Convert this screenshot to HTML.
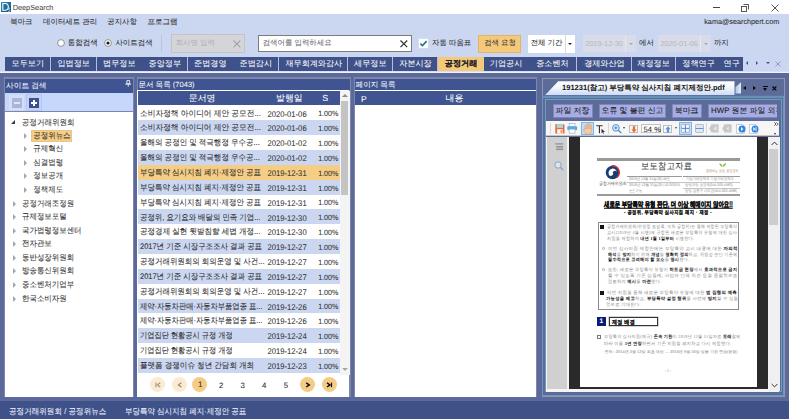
<!DOCTYPE html><html><head><meta charset="utf-8"><style>
*{box-sizing:border-box;margin:0;padding:0}
html,body{width:789px;height:419px;overflow:hidden;background:#5c6a9b;font-family:"Liberation Sans",sans-serif;text-rendering:geometricPrecision}
.a{position:absolute}
.t{position:absolute;white-space:nowrap;line-height:1;-webkit-text-stroke-width:0.06px}
</style></head><body>
<div class="a" style="left:0px;top:0px;width:789.00px;height:14.00px;background:#fff;"></div>
<svg class="a" style="left:1px;top:2px" width="10" height="10"><defs><linearGradient id="ig" x1="0" y1="0" x2="1" y2="1"><stop offset="0" stop-color="#2a8ab8"/><stop offset="1" stop-color="#15507e"/></linearGradient></defs><rect width="10" height="10" fill="url(#ig)"/><path d="M1.8 1.5H4.2Q7.3 1.5 7.3 4.8Q7.3 8.2 4.2 8.2H1.8Z" fill="none" stroke="#fff" stroke-width="1.1"/><path d="M9 6.2Q7.5 5.8 7.6 7.1Q7.7 8 8.6 8.2Q9.5 8.5 8.9 9.3Q8.2 9.8 7.2 9.3" fill="none" stroke="#fff" stroke-width="0.6"/></svg>
<div class="t" style="left:12.63px;top:4.34px;font-size:7.35px;color:#3a3a3a;-webkit-text-stroke-width:0">DeepSearch</div>
<div class="a" style="left:713px;top:6.5px;width:7.00px;height:1.00px;background:#444;"></div>
<svg class="a" style="left:740.5px;top:3.5px" width="8" height="8"><path d="M2.5 0.5H7.5V5.5" fill="none" stroke="#444" stroke-width="0.9"/><rect x="0.5" y="2.5" width="5" height="5" fill="none" stroke="#444" stroke-width="0.9"/></svg>
<svg class="a" style="left:770.5px;top:3.5px" width="8" height="8"><path d="M0.5 0.5L7.5 7.5M7.5 0.5L0.5 7.5" stroke="#444" stroke-width="0.9"/></svg>
<div class="a" style="left:0px;top:14px;width:789.00px;height:57.00px;background:#cbd6f0;"></div>
<div class="a" style="left:0px;top:71px;width:789.00px;height:1.00px;background:#d8def3;"></div>
<div class="a" style="left:0px;top:72px;width:789.00px;height:1.00px;background:#eef1fa;"></div>
<div class="t" style="left:10.33px;top:17.94px;font-size:7.35px;color:#2a2a2a;">북마크</div>
<div class="t" style="left:43.03px;top:17.89px;font-size:7.45px;color:#2a2a2a;">데이터세트 관리</div>
<div class="t" style="left:107.33px;top:17.91px;font-size:7.4px;color:#2a2a2a;">공지사항</div>
<div class="t" style="left:147.42px;top:17.84px;font-size:7.55px;color:#2a2a2a;">프로그램</div>
<div class="t" style="left:704.24px;top:18.19px;font-size:7.26px;color:#2a2a2a;-webkit-text-stroke-width:0.05px">kama@searchpert.com</div>
<svg class="a" style="left:56.5px;top:39px" width="8" height="8"><circle cx="4" cy="4" r="3.4" fill="#fff" stroke="#7a7a7a" stroke-width="0.8"/></svg>
<div class="t" style="left:67.83px;top:39.16px;font-size:7.5px;color:#2a2a2a;">통합검색</div>
<svg class="a" style="left:104px;top:39px" width="8" height="8"><circle cx="4" cy="4" r="3.4" fill="#fff" stroke="#7a7a7a" stroke-width="0.8"/><circle cx="4" cy="4" r="1.6" fill="#1a1a1a"/></svg>
<div class="t" style="left:115.43px;top:39.19px;font-size:7.45px;color:#2a2a2a;">사이트검색</div>
<div class="a" style="left:161px;top:34.5px;width:1.00px;height:17.50px;background:#bcc3de;"></div>
<div class="a" style="left:171.2px;top:34.3px;width:73.80px;height:18.50px;background:#d5d5d9;border:1px solid #c4c4c8"></div>
<div class="t" style="left:175.63px;top:39.29px;font-size:7.45px;color:#b2b2b6;">회사명 입력</div>
<svg class="a" style="left:233.3px;top:39.6px" width="8" height="8"><path d="M0.5 0.5L7.3 7.3M7.3 0.5L0.5 7.3" stroke="#a4a4a8" stroke-width="1.1"/></svg>
<div class="a" style="left:257.5px;top:34.5px;width:154.10px;height:17.80px;background:#fff;border:1px solid #7c7c7c"></div>
<div class="t" style="left:262.63px;top:39.29px;font-size:7.45px;color:#6a6a6a;">검색어를 입력하세요</div>
<svg class="a" style="left:399.8px;top:39.6px" width="8" height="8"><path d="M0.5 0.5L7.2 7.2M7.2 0.5L0.5 7.2" stroke="#333" stroke-width="1.2"/></svg>
<div class="a" style="left:418.4px;top:38.4px;width:10.20px;height:10.20px;background:#fff;border:0.6px solid #d8dce8"></div>
<svg class="a" style="left:419px;top:39px" width="9" height="9"><path d="M1.4 4.6L3.5 6.7L7.6 2.1" stroke="#1b6c9e" stroke-width="1.6" fill="none"/></svg>
<div class="t" style="left:432.03px;top:39.09px;font-size:7.45px;color:#2a2a2a;">자동 따옴표</div>
<div class="a" style="left:478.4px;top:34.8px;width:42.60px;height:17.80px;background:#f5c97c;border:1px solid #e2b468"></div>
<div class="t" style="left:484.13px;top:39.49px;font-size:7.45px;color:#333;">검색 요청</div>
<div class="a" style="left:527.5px;top:34.5px;width:47.90px;height:18.00px;background:#fff;"></div>
<div class="a" style="left:565px;top:34.5px;width:1.00px;height:18.00px;background:#dadada;"></div>
<div class="t" style="left:530.63px;top:39.49px;font-size:7.45px;color:#2a2a2a;">전체 기간</div>
<div class="a" style="left:568.3px;top:42.5px;width:0;height:0;border-left:2.3px solid transparent;border-right:2.3px solid transparent;border-top:2.8px solid #222"></div>
<div class="a" style="left:583.3px;top:35px;width:52.70px;height:17.40px;background:#d9dce8;"></div>
<div class="a" style="left:625.3px;top:36px;width:1.00px;height:15.50px;background:#e6e8f0;"></div>
<div class="t" style="left:585.43px;top:40.23px;font-size:7.3px;color:#b6b9c6;">2019-12-30</div>
<div class="a" style="left:628.8px;top:42.8px;width:0;height:0;border-left:2px solid transparent;border-right:2px solid transparent;border-top:2.5px solid #a4a8b4"></div>
<div class="a" style="left:658.3px;top:35px;width:52.70px;height:17.40px;background:#d9dce8;"></div>
<div class="a" style="left:700.3px;top:36px;width:1.00px;height:15.50px;background:#e6e8f0;"></div>
<div class="t" style="left:660.43px;top:40.23px;font-size:7.3px;color:#b6b9c6;">2020-01-06</div>
<div class="a" style="left:703.8px;top:42.8px;width:0;height:0;border-left:2px solid transparent;border-right:2px solid transparent;border-top:2.5px solid #a4a8b4"></div>
<div class="t" style="left:639.03px;top:39.49px;font-size:7.45px;color:#2a2a2a;">에서</div>
<div class="t" style="left:713.93px;top:39.49px;font-size:7.45px;color:#2a2a2a;">까지</div>
<div class="a" style="left:5px;top:56.5px;width:738.30px;height:14.30px;background:#b4bde0;"></div>
<div class="a" style="left:5px;top:56.5px;width:45.00px;height:14.3px;background:#3f5189;overflow:hidden"></div>
<div class="t" style="left:11.62px;top:59.50px;font-size:8.1px;color:#fff;">모두보기</div>
<div class="a" style="left:50.8px;top:56.5px;width:45.20px;height:14.3px;background:#3f5189;overflow:hidden"></div>
<div class="t" style="left:57.52px;top:59.50px;font-size:8.1px;color:#fff;">입법정보</div>
<div class="a" style="left:96.5px;top:56.5px;width:45.00px;height:14.3px;background:#3f5189;overflow:hidden"></div>
<div class="t" style="left:103.12px;top:59.50px;font-size:8.1px;color:#fff;">법무정보</div>
<div class="a" style="left:142px;top:56.5px;width:45.00px;height:14.3px;background:#3f5189;overflow:hidden"></div>
<div class="t" style="left:148.62px;top:59.50px;font-size:8.1px;color:#fff;">중앙정부</div>
<div class="a" style="left:187.5px;top:56.5px;width:45.00px;height:14.3px;background:#3f5189;overflow:hidden"></div>
<div class="t" style="left:194.12px;top:59.50px;font-size:8.1px;color:#fff;">준법경영</div>
<div class="a" style="left:233px;top:56.5px;width:45.00px;height:14.3px;background:#3f5189;overflow:hidden"></div>
<div class="t" style="left:239.62px;top:59.50px;font-size:8.1px;color:#fff;">준법감시</div>
<div class="a" style="left:278.5px;top:56.5px;width:68.90px;height:14.3px;background:#3f5189;overflow:hidden"></div>
<div class="t" style="left:285.47px;top:59.50px;font-size:8.1px;color:#fff;">재무회계와감사</div>
<div class="a" style="left:348px;top:56.5px;width:44.00px;height:14.3px;background:#3f5189;overflow:hidden"></div>
<div class="t" style="left:354.12px;top:59.50px;font-size:8.1px;color:#fff;">세무정보</div>
<div class="a" style="left:393px;top:56.5px;width:44.40px;height:14.3px;background:#3f5189;overflow:hidden"></div>
<div class="t" style="left:399.32px;top:59.50px;font-size:8.1px;color:#fff;">자본시장</div>
<div class="a" style="left:438px;top:56.5px;width:45.50px;height:14.3px;background:#f4c97c;overflow:hidden"></div>
<div class="t" style="left:444.87px;top:59.50px;font-size:8.1px;color:#222;font-weight:bold;">공정거래</div>
<div class="a" style="left:484px;top:56.5px;width:43.50px;height:14.3px;background:#3f5189;overflow:hidden"></div>
<div class="t" style="left:489.87px;top:59.50px;font-size:8.1px;color:#fff;">기업공시</div>
<div class="a" style="left:528px;top:56.5px;width:48.30px;height:14.3px;background:#3f5189;overflow:hidden"></div>
<div class="t" style="left:536.27px;top:59.50px;font-size:8.1px;color:#fff;">중소벤처</div>
<div class="a" style="left:577px;top:56.5px;width:53.80px;height:14.3px;background:#3f5189;overflow:hidden"></div>
<div class="t" style="left:584.16px;top:59.50px;font-size:8.1px;color:#fff;">경제와산업</div>
<div class="a" style="left:631.5px;top:56.5px;width:43.50px;height:14.3px;background:#3f5189;overflow:hidden"></div>
<div class="t" style="left:637.37px;top:59.50px;font-size:8.1px;color:#fff;">재정정보</div>
<div class="a" style="left:676px;top:56.5px;width:44.50px;height:14.3px;background:#3f5189;overflow:hidden"></div>
<div class="t" style="left:682.37px;top:59.50px;font-size:8.1px;color:#fff;">정책연구</div>
<div class="a" style="left:721px;top:56.5px;width:22.30px;height:14.3px;background:#3f5189;overflow:hidden"></div>
<div class="t" style="left:723.60px;top:59.50px;font-size:8.1px;color:#fff;">연구</div>
<div class="a" style="left:745.5px;top:60.8px;width:0;height:0;border-top:2.4px solid transparent;border-bottom:2.4px solid transparent;border-right:2.8px solid #3d4f8e"></div>
<div class="a" style="left:755.5px;top:60.8px;width:0;height:0;border-top:2.4px solid transparent;border-bottom:2.4px solid transparent;border-left:2.8px solid #3d4f8e"></div>
<div class="a" style="left:765.5px;top:62px;width:0;height:0;border-left:2.5px solid transparent;border-right:2.5px solid transparent;border-top:2.8px solid #3d4f8e"></div>
<svg class="a" style="left:774.5px;top:60.5px" width="6" height="6"><path d="M0.5 0.5L5.5 5.5M5.5 0.5L0.5 5.5" stroke="#8d95b8" stroke-width="0.9"/></svg>
<div class="a" style="left:0px;top:400.6px;width:789.00px;height:18.40px;background:#3f5189;"></div>
<div class="t" style="left:9.40px;top:407.01px;color:#eef0fa;font-size:7.5px;letter-spacing:0.1px;transform:scale(0.9959,1.1000);transform-origin:0 0">공정거래위원회 / 공정위뉴스</div>
<div class="t" style="left:124.70px;top:406.77px;color:#eef0fa;font-size:7.5px;;transform:scale(1.0004,1.1000);transform-origin:0 0">부당특약 심시지침 폐지·제정안 공표</div>
<div class="a" style="left:4.3px;top:77px;width:129.70px;height:320.10px;background:#7e86aa;"></div>
<div class="a" style="left:5.25px;top:78.5px;width:127.55px;height:14.80px;background:#3f5490;"></div>
<div class="t" style="left:6.12px;top:81.82px;font-size:7.67px;color:#f4f6fc;">사이트 검색</div>
<svg class="a" style="left:124.6px;top:79.8px" width="7" height="7"><path d="M1.9 0.6H4.7V3.6H1.9Z" fill="none" stroke="#f0f2fa" stroke-width="0.9"/><path d="M0.4 4.1H6.1" stroke="#f0f2fa" stroke-width="1.1"/><path d="M3.3 4.4V6.7" stroke="#f0f2fa" stroke-width="0.9"/></svg>
<div class="a" style="left:5.25px;top:93.3px;width:127.55px;height:18.20px;background:#c6d7fd;"></div>
<div class="a" style="left:8.1px;top:94.3px;width:16.90px;height:16.90px;background:#d3def8;border:1px solid #cbd6f2"></div>
<div class="a" style="left:12px;top:98.1px;width:9.80px;height:9.60px;background:#a9b6d9;"></div>
<div class="a" style="left:14px;top:102.2px;width:5.80px;height:1.40px;background:#dfe6f6;"></div>
<div class="a" style="left:25.8px;top:94.3px;width:16.20px;height:16.90px;background:#c3d1f5;border:1px solid #b9c7ec"></div>
<div class="a" style="left:29.1px;top:98.1px;width:9.90px;height:9.60px;background:#3a4f8c;"></div>
<div class="a" style="left:31px;top:102.2px;width:6.10px;height:1.40px;background:#fff;"></div>
<div class="a" style="left:33.35px;top:100px;width:1.40px;height:5.80px;background:#fff;"></div>
<div class="a" style="left:5.25px;top:111.5px;width:127.55px;height:285.60px;background:#fff;"></div>
<div class="a" style="left:11.2px;top:120.3px;width:0;height:0;border-left:4.8px solid transparent;border-bottom:4.5px solid #3a3a3a"></div>
<div class="t" style="left:21.82px;top:118.53px;font-size:7.56px;color:#333;transform:scaleY(1.08);transform-origin:0 3.97px;">공정거래위원회</div>
<div class="a" style="left:31.3px;top:129.5px;width:40.70px;height:12.60px;background:#f5cd84;border:0.6px solid #e6c690"></div>
<div class="a" style="left:24.3px;top:132.90px;width:0;height:0;border-top:3.1px solid transparent;border-bottom:3.1px solid transparent;border-left:3.9px solid #a6a6a6"></div>
<div class="t" style="left:33.33px;top:132.09px;font-size:7.45px;color:#333;transform:scaleY(1.08);transform-origin:0 3.91px;">공정위뉴스</div>
<div class="a" style="left:24.3px;top:146.20px;width:0;height:0;border-top:3.1px solid transparent;border-bottom:3.1px solid transparent;border-left:3.9px solid #a6a6a6"></div>
<div class="t" style="left:33.33px;top:145.39px;font-size:7.45px;color:#333;transform:scaleY(1.08);transform-origin:0 3.91px;">규제혁신</div>
<div class="a" style="left:24.3px;top:159.80px;width:0;height:0;border-top:3.1px solid transparent;border-bottom:3.1px solid transparent;border-left:3.9px solid #a6a6a6"></div>
<div class="t" style="left:33.33px;top:158.99px;font-size:7.45px;color:#333;transform:scaleY(1.08);transform-origin:0 3.91px;">심결법령</div>
<div class="a" style="left:24.3px;top:173.30px;width:0;height:0;border-top:3.1px solid transparent;border-bottom:3.1px solid transparent;border-left:3.9px solid #a6a6a6"></div>
<div class="t" style="left:33.33px;top:172.49px;font-size:7.45px;color:#333;transform:scaleY(1.08);transform-origin:0 3.91px;">정보공개</div>
<div class="a" style="left:24.3px;top:186.80px;width:0;height:0;border-top:3.1px solid transparent;border-bottom:3.1px solid transparent;border-left:3.9px solid #a6a6a6"></div>
<div class="t" style="left:33.33px;top:185.99px;font-size:7.45px;color:#333;transform:scaleY(1.08);transform-origin:0 3.91px;">정책제도</div>
<div class="a" style="left:13.2px;top:200.90px;width:0;height:0;border-top:3.1px solid transparent;border-bottom:3.1px solid transparent;border-left:3.9px solid #a6a6a6"></div>
<div class="t" style="left:22.03px;top:200.09px;font-size:7.45px;color:#333;transform:scaleY(1.08);transform-origin:0 3.91px;">공정거래조정원</div>
<div class="a" style="left:13.2px;top:214.30px;width:0;height:0;border-top:3.1px solid transparent;border-bottom:3.1px solid transparent;border-left:3.9px solid #a6a6a6"></div>
<div class="t" style="left:22.03px;top:213.49px;font-size:7.45px;color:#333;transform:scaleY(1.08);transform-origin:0 3.91px;">규제정보포털</div>
<div class="a" style="left:13.2px;top:227.70px;width:0;height:0;border-top:3.1px solid transparent;border-bottom:3.1px solid transparent;border-left:3.9px solid #a6a6a6"></div>
<div class="t" style="left:22.03px;top:226.89px;font-size:7.45px;color:#333;transform:scaleY(1.08);transform-origin:0 3.91px;">국가법령정보센터</div>
<div class="a" style="left:13.2px;top:241.20px;width:0;height:0;border-top:3.1px solid transparent;border-bottom:3.1px solid transparent;border-left:3.9px solid #a6a6a6"></div>
<div class="t" style="left:22.03px;top:240.39px;font-size:7.45px;color:#333;transform:scaleY(1.08);transform-origin:0 3.91px;">전자관보</div>
<div class="a" style="left:13.2px;top:254.70px;width:0;height:0;border-top:3.1px solid transparent;border-bottom:3.1px solid transparent;border-left:3.9px solid #a6a6a6"></div>
<div class="t" style="left:22.03px;top:253.89px;font-size:7.45px;color:#333;transform:scaleY(1.08);transform-origin:0 3.91px;">동반성장위원회</div>
<div class="a" style="left:13.2px;top:268.20px;width:0;height:0;border-top:3.1px solid transparent;border-bottom:3.1px solid transparent;border-left:3.9px solid #a6a6a6"></div>
<div class="t" style="left:22.03px;top:267.39px;font-size:7.45px;color:#333;transform:scaleY(1.08);transform-origin:0 3.91px;">방송통신위원회</div>
<div class="a" style="left:13.2px;top:281.70px;width:0;height:0;border-top:3.1px solid transparent;border-bottom:3.1px solid transparent;border-left:3.9px solid #a6a6a6"></div>
<div class="t" style="left:22.03px;top:280.89px;font-size:7.45px;color:#333;transform:scaleY(1.08);transform-origin:0 3.91px;">중소벤처기업부</div>
<div class="a" style="left:13.2px;top:295.50px;width:0;height:0;border-top:3.1px solid transparent;border-bottom:3.1px solid transparent;border-left:3.9px solid #a6a6a6"></div>
<div class="t" style="left:22.03px;top:294.69px;font-size:7.45px;color:#333;transform:scaleY(1.08);transform-origin:0 3.91px;">한국소비자원</div>
<div class="a" style="left:136.5px;top:77px;width:214.00px;height:320.10px;background:#7e86aa;"></div>
<div class="a" style="left:137.5px;top:78.5px;width:212.00px;height:11.80px;background:#3f5490;"></div>
<div class="t" style="left:138.42px;top:80.94px;font-size:7.55px;color:#f4f6fc;">문서 목록 (7043)</div>
<div class="a" style="left:137.2px;top:90.3px;width:212.30px;height:306.80px;background:#fff;"></div>
<div class="a" style="left:138.2px;top:91.3px;width:201.80px;height:14.20px;background:#3f5490;"></div>
<div class="t" style="left:188.75px;top:94.03px;font-size:8.9px;color:#fff;">문서명</div>
<div class="t" style="left:276.06px;top:94.03px;font-size:8.9px;color:#fff;">발행일</div>
<div class="t" style="left:322.16px;top:94.47px;font-size:8.9px;color:#fff;">S</div>
<div class="a" style="left:138.3px;top:105.6px;width:201.70px;height:14.84px;background:#ffffff;"></div>
<div class="t" style="left:139.69px;top:109.65px;color:#2a2a2a;font-size:7.55px;;transform:scale(1.0222,1.0800);transform-origin:0 0">소비자정책 아이디어 제안 공모전...</div>
<div class="t" style="left:267.42px;top:110.65px;font-size:7.68px;color:#2e2e2e;transform:scaleY(1.08);transform-origin:0 3.65px;-webkit-text-stroke-width:0.04px">2020-01-06</div>
<div class="t" style="left:318.14px;top:111.43px;font-size:7.1px;color:#2e2e2e;transform:scaleY(1.08);transform-origin:0 3.37px;-webkit-text-stroke-width:0.04px">1.00%</div>
<div class="a" style="left:138.3px;top:120.44px;width:201.70px;height:14.84px;background:#cbd6f1;"></div>
<div class="t" style="left:139.69px;top:124.49px;color:#2a2a2a;font-size:7.55px;;transform:scale(1.0222,1.0800);transform-origin:0 0">소비자정책 아이디어 제안 공모전...</div>
<div class="t" style="left:267.42px;top:125.49px;font-size:7.68px;color:#2e2e2e;transform:scaleY(1.08);transform-origin:0 3.65px;-webkit-text-stroke-width:0.04px">2020-01-06</div>
<div class="t" style="left:318.14px;top:126.27px;font-size:7.1px;color:#2e2e2e;transform:scaleY(1.08);transform-origin:0 3.37px;-webkit-text-stroke-width:0.04px">1.00%</div>
<div class="a" style="left:138.3px;top:135.28px;width:201.70px;height:14.84px;background:#ffffff;"></div>
<div class="t" style="left:139.70px;top:139.33px;color:#2a2a2a;font-size:7.55px;;transform:scale(0.9954,1.0800);transform-origin:0 0">올해의 공정인 및 적극행정 우수공...</div>
<div class="t" style="left:267.42px;top:140.33px;font-size:7.68px;color:#2e2e2e;transform:scaleY(1.08);transform-origin:0 3.65px;-webkit-text-stroke-width:0.04px">2020-01-02</div>
<div class="t" style="left:318.14px;top:141.11px;font-size:7.1px;color:#2e2e2e;transform:scaleY(1.08);transform-origin:0 3.37px;-webkit-text-stroke-width:0.04px">1.00%</div>
<div class="a" style="left:138.3px;top:150.12px;width:201.70px;height:14.84px;background:#cbd6f1;"></div>
<div class="t" style="left:139.70px;top:154.17px;color:#2a2a2a;font-size:7.55px;;transform:scale(0.9954,1.0800);transform-origin:0 0">올해의 공정인 및 적극행정 우수공...</div>
<div class="t" style="left:267.42px;top:155.17px;font-size:7.68px;color:#2e2e2e;transform:scaleY(1.08);transform-origin:0 3.65px;-webkit-text-stroke-width:0.04px">2020-01-02</div>
<div class="t" style="left:318.14px;top:155.95px;font-size:7.1px;color:#2e2e2e;transform:scaleY(1.08);transform-origin:0 3.37px;-webkit-text-stroke-width:0.04px">1.00%</div>
<div class="a" style="left:138.3px;top:164.96px;width:201.70px;height:14.84px;background:#f5cd84;"></div>
<div class="t" style="left:139.70px;top:169.01px;color:#2a2a2a;font-size:7.55px;;transform:scale(0.9917,1.0800);transform-origin:0 0">부당특약 심시지침 폐지·제정안 공표</div>
<div class="t" style="left:267.42px;top:170.01px;font-size:7.68px;color:#2e2e2e;transform:scaleY(1.08);transform-origin:0 3.65px;-webkit-text-stroke-width:0.04px">2019-12-31</div>
<div class="t" style="left:318.14px;top:170.79px;font-size:7.1px;color:#2e2e2e;transform:scaleY(1.08);transform-origin:0 3.37px;-webkit-text-stroke-width:0.04px">1.00%</div>
<div class="a" style="left:138.3px;top:179.8px;width:201.70px;height:14.84px;background:#cbd6f1;"></div>
<div class="t" style="left:139.70px;top:183.85px;color:#2a2a2a;font-size:7.55px;;transform:scale(0.9917,1.0800);transform-origin:0 0">부당특약 심시지침 폐지·제정안 공표</div>
<div class="t" style="left:267.42px;top:184.85px;font-size:7.68px;color:#2e2e2e;transform:scaleY(1.08);transform-origin:0 3.65px;-webkit-text-stroke-width:0.04px">2019-12-31</div>
<div class="t" style="left:318.14px;top:185.63px;font-size:7.1px;color:#2e2e2e;transform:scaleY(1.08);transform-origin:0 3.37px;-webkit-text-stroke-width:0.04px">1.00%</div>
<div class="a" style="left:138.3px;top:194.64px;width:201.70px;height:14.84px;background:#ffffff;"></div>
<div class="t" style="left:139.70px;top:198.69px;color:#2a2a2a;font-size:7.55px;;transform:scale(0.9917,1.0800);transform-origin:0 0">부당특약 심시지침 폐지·제정안 공표</div>
<div class="t" style="left:267.42px;top:199.69px;font-size:7.68px;color:#2e2e2e;transform:scaleY(1.08);transform-origin:0 3.65px;-webkit-text-stroke-width:0.04px">2019-12-31</div>
<div class="t" style="left:318.14px;top:200.47px;font-size:7.1px;color:#2e2e2e;transform:scaleY(1.08);transform-origin:0 3.37px;-webkit-text-stroke-width:0.04px">1.00%</div>
<div class="a" style="left:138.3px;top:209.48px;width:201.70px;height:14.84px;background:#cbd6f1;"></div>
<div class="t" style="left:139.71px;top:213.53px;color:#2a2a2a;font-size:7.55px;;transform:scale(0.9831,1.0800);transform-origin:0 0">공정위, 요기요와 배달의 민족 기업...</div>
<div class="t" style="left:267.42px;top:214.53px;font-size:7.68px;color:#2e2e2e;transform:scaleY(1.08);transform-origin:0 3.65px;-webkit-text-stroke-width:0.04px">2019-12-30</div>
<div class="t" style="left:318.14px;top:215.31px;font-size:7.1px;color:#2e2e2e;transform:scaleY(1.08);transform-origin:0 3.37px;-webkit-text-stroke-width:0.04px">1.00%</div>
<div class="a" style="left:138.3px;top:224.32px;width:201.70px;height:14.84px;background:#ffffff;"></div>
<div class="t" style="left:139.70px;top:228.37px;color:#2a2a2a;font-size:7.55px;;transform:scale(0.9996,1.0800);transform-origin:0 0">공정경제 실현 뒷받침할 세법 개정...</div>
<div class="t" style="left:267.42px;top:229.37px;font-size:7.68px;color:#2e2e2e;transform:scaleY(1.08);transform-origin:0 3.65px;-webkit-text-stroke-width:0.04px">2019-12-30</div>
<div class="t" style="left:318.14px;top:230.15px;font-size:7.1px;color:#2e2e2e;transform:scaleY(1.08);transform-origin:0 3.37px;-webkit-text-stroke-width:0.04px">1.00%</div>
<div class="a" style="left:138.3px;top:239.16px;width:201.70px;height:14.84px;background:#cbd6f1;"></div>
<div class="t" style="left:139.95px;top:243.34px;color:#2a2a2a;font-size:7.55px;;transform:scale(0.9902,1.0800);transform-origin:0 0">2017년 기준 시장구조조사 결과 공표</div>
<div class="t" style="left:267.42px;top:244.21px;font-size:7.68px;color:#2e2e2e;transform:scaleY(1.08);transform-origin:0 3.65px;-webkit-text-stroke-width:0.04px">2019-12-27</div>
<div class="t" style="left:318.14px;top:244.99px;font-size:7.1px;color:#2e2e2e;transform:scaleY(1.08);transform-origin:0 3.37px;-webkit-text-stroke-width:0.04px">1.00%</div>
<div class="a" style="left:138.3px;top:254.0px;width:201.70px;height:14.84px;background:#ffffff;"></div>
<div class="t" style="left:139.71px;top:258.05px;color:#2a2a2a;font-size:7.55px;;transform:scale(0.9900,1.0800);transform-origin:0 0">공정거래위원회의 회의운영 및 사건...</div>
<div class="t" style="left:267.42px;top:259.05px;font-size:7.68px;color:#2e2e2e;transform:scaleY(1.08);transform-origin:0 3.65px;-webkit-text-stroke-width:0.04px">2019-12-27</div>
<div class="t" style="left:318.14px;top:259.83px;font-size:7.1px;color:#2e2e2e;transform:scaleY(1.08);transform-origin:0 3.37px;-webkit-text-stroke-width:0.04px">1.00%</div>
<div class="a" style="left:138.3px;top:268.84px;width:201.70px;height:14.84px;background:#cbd6f1;"></div>
<div class="t" style="left:139.95px;top:273.02px;color:#2a2a2a;font-size:7.55px;;transform:scale(0.9902,1.0800);transform-origin:0 0">2017년 기준 시장구조조사 결과 공표</div>
<div class="t" style="left:267.42px;top:273.89px;font-size:7.68px;color:#2e2e2e;transform:scaleY(1.08);transform-origin:0 3.65px;-webkit-text-stroke-width:0.04px">2019-12-27</div>
<div class="t" style="left:318.14px;top:274.67px;font-size:7.1px;color:#2e2e2e;transform:scaleY(1.08);transform-origin:0 3.37px;-webkit-text-stroke-width:0.04px">1.00%</div>
<div class="a" style="left:138.3px;top:283.68px;width:201.70px;height:14.84px;background:#ffffff;"></div>
<div class="t" style="left:139.71px;top:287.73px;color:#2a2a2a;font-size:7.55px;;transform:scale(0.9900,1.0800);transform-origin:0 0">공정거래위원회의 회의운영 및 사건...</div>
<div class="t" style="left:267.42px;top:288.73px;font-size:7.68px;color:#2e2e2e;transform:scaleY(1.08);transform-origin:0 3.65px;-webkit-text-stroke-width:0.04px">2019-12-27</div>
<div class="t" style="left:318.14px;top:289.51px;font-size:7.1px;color:#2e2e2e;transform:scaleY(1.08);transform-origin:0 3.37px;-webkit-text-stroke-width:0.04px">1.00%</div>
<div class="a" style="left:138.3px;top:298.52px;width:201.70px;height:14.84px;background:#cbd6f1;"></div>
<div class="t" style="left:139.96px;top:302.57px;color:#2a2a2a;font-size:7.55px;;transform:scale(0.9662,1.0800);transform-origin:0 0">제약·자동차판매·자동차부품업종 표...</div>
<div class="t" style="left:267.42px;top:303.57px;font-size:7.68px;color:#2e2e2e;transform:scaleY(1.08);transform-origin:0 3.65px;-webkit-text-stroke-width:0.04px">2019-12-26</div>
<div class="t" style="left:318.14px;top:304.35px;font-size:7.1px;color:#2e2e2e;transform:scaleY(1.08);transform-origin:0 3.37px;-webkit-text-stroke-width:0.04px">1.00%</div>
<div class="a" style="left:138.3px;top:313.36px;width:201.70px;height:14.84px;background:#ffffff;"></div>
<div class="t" style="left:139.96px;top:317.41px;color:#2a2a2a;font-size:7.55px;;transform:scale(0.9662,1.0800);transform-origin:0 0">제약·자동차판매·자동차부품업종 표...</div>
<div class="t" style="left:267.42px;top:318.41px;font-size:7.68px;color:#2e2e2e;transform:scaleY(1.08);transform-origin:0 3.65px;-webkit-text-stroke-width:0.04px">2019-12-26</div>
<div class="t" style="left:318.14px;top:319.19px;font-size:7.1px;color:#2e2e2e;transform:scaleY(1.08);transform-origin:0 3.37px;-webkit-text-stroke-width:0.04px">1.00%</div>
<div class="a" style="left:138.3px;top:328.2px;width:201.70px;height:14.84px;background:#cbd6f1;"></div>
<div class="t" style="left:139.72px;top:332.25px;color:#2a2a2a;font-size:7.55px;;transform:scale(0.9564,1.0800);transform-origin:0 0">기업집단 현황공시 규정 개정</div>
<div class="t" style="left:267.42px;top:333.25px;font-size:7.68px;color:#2e2e2e;transform:scaleY(1.08);transform-origin:0 3.65px;-webkit-text-stroke-width:0.04px">2019-12-24</div>
<div class="t" style="left:318.14px;top:334.03px;font-size:7.1px;color:#2e2e2e;transform:scaleY(1.08);transform-origin:0 3.37px;-webkit-text-stroke-width:0.04px">1.00%</div>
<div class="a" style="left:138.3px;top:343.04px;width:201.70px;height:14.84px;background:#ffffff;"></div>
<div class="t" style="left:139.72px;top:347.09px;color:#2a2a2a;font-size:7.55px;;transform:scale(0.9564,1.0800);transform-origin:0 0">기업집단 현황공시 규정 개정</div>
<div class="t" style="left:267.42px;top:348.09px;font-size:7.68px;color:#2e2e2e;transform:scaleY(1.08);transform-origin:0 3.65px;-webkit-text-stroke-width:0.04px">2019-12-24</div>
<div class="t" style="left:318.14px;top:348.87px;font-size:7.1px;color:#2e2e2e;transform:scaleY(1.08);transform-origin:0 3.37px;-webkit-text-stroke-width:0.04px">1.00%</div>
<div class="a" style="left:138.3px;top:357.88px;width:201.70px;height:14.84px;background:#cbd6f1;"></div>
<div class="t" style="left:139.70px;top:361.93px;color:#2a2a2a;font-size:7.55px;;transform:scale(1.0009,1.0800);transform-origin:0 0">플랫폼 경쟁이슈 청년 간담회 개최</div>
<div class="t" style="left:267.42px;top:362.93px;font-size:7.68px;color:#2e2e2e;transform:scaleY(1.08);transform-origin:0 3.65px;-webkit-text-stroke-width:0.04px">2019-12-23</div>
<div class="t" style="left:318.14px;top:363.71px;font-size:7.1px;color:#2e2e2e;transform:scaleY(1.08);transform-origin:0 3.37px;-webkit-text-stroke-width:0.04px">1.00%</div>
<div class="a" style="left:340px;top:90.6px;width:9.50px;height:284.40px;background:#f4f4f4;"></div>
<div class="a" style="left:341.8px;top:94px;width:0;height:0;border-left:3.3px solid transparent;border-right:3.3px solid transparent;border-bottom:3.2px solid #8a8a8a"></div>
<div class="a" style="left:341.2px;top:100.75px;width:7.20px;height:94.05px;background:#c4c4c4;"></div>
<div class="a" style="left:341.8px;top:367.5px;width:0;height:0;border-left:3.3px solid transparent;border-right:3.3px solid transparent;border-top:3.4px solid #a8a8a8"></div>
<div class="a" style="left:150.15px;top:377px;width:15.2px;height:15.2px;border-radius:50%;background:#fcebd0"></div>
<div class="a" style="left:171.80px;top:377px;width:15.2px;height:15.2px;border-radius:50%;background:#fcebd0"></div>
<div class="a" style="left:192.20px;top:377px;width:15.2px;height:15.2px;border-radius:50%;background:#f5cc85"></div>
<div class="a" style="left:300.00px;top:377px;width:15.2px;height:15.2px;border-radius:50%;background:#f5cc85"></div>
<div class="a" style="left:321.60px;top:377px;width:15.2px;height:15.2px;border-radius:50%;background:#f5cc85"></div>
<svg class="a" style="left:154.5px;top:381.5px" width="7" height="6"><path d="M1 0.6V5.2" stroke="#9a9488" stroke-width="1.1"/><path d="M5.2 0.8L2.4 2.9L5.2 5" stroke="#9a9488" stroke-width="1.1" fill="none"/></svg>
<svg class="a" style="left:176.8px;top:381.5px" width="6" height="6"><path d="M4.4 0.8L1.4 2.9L4.4 5" stroke="#8a8478" stroke-width="1.1" fill="none"/></svg>
<div class="t" style="left:198.00px;top:381.40px;font-size:8px;color:#2a2a2a;">1</div>
<div class="t" style="left:218.91px;top:381.80px;font-size:7.8px;color:#2a2a2a;">2</div>
<div class="t" style="left:240.41px;top:381.80px;font-size:7.8px;color:#2a2a2a;">3</div>
<div class="t" style="left:262.01px;top:381.80px;font-size:7.8px;color:#2a2a2a;">4</div>
<div class="t" style="left:283.71px;top:381.80px;font-size:7.8px;color:#2a2a2a;">5</div>
<svg class="a" style="left:305px;top:381.7px" width="6" height="6"><path d="M1.2 0.8L4.3 2.9L1.2 5" stroke="#111" stroke-width="1.5" fill="none"/></svg>
<svg class="a" style="left:325.8px;top:381.7px" width="7" height="6"><path d="M1 0.8L4 2.9L1 5" stroke="#111" stroke-width="1.5" fill="none"/><path d="M5.5 0.6V5.2" stroke="#111" stroke-width="1.2"/></svg>
<div class="a" style="left:353.5px;top:77px;width:183.50px;height:320.10px;background:#7e86aa;"></div>
<div class="a" style="left:354.5px;top:78.5px;width:181.50px;height:11.80px;background:#3f5490;"></div>
<div class="t" style="left:355.62px;top:80.94px;font-size:7.55px;color:#f4f6fc;">페이지 목록</div>
<div class="a" style="left:354.5px;top:90.3px;width:181.50px;height:306.80px;background:#fff;"></div>
<div class="a" style="left:354.5px;top:91.1px;width:181.10px;height:14.10px;background:#3f5490;"></div>
<div class="t" style="left:361.07px;top:94.66px;font-size:8.5px;color:#fff;">P</div>
<div class="t" style="left:445.56px;top:94.03px;font-size:8.9px;color:#fff;">내용</div>
<div class="a" style="left:542px;top:77.5px;width:243.00px;height:319.60px;background:#9096b2;"></div>
<div class="a" style="left:543px;top:78.5px;width:241.20px;height:317.80px;background:#5d6b98;"></div>
<svg class="a" style="left:540px;top:78px" width="245" height="20"><defs><linearGradient id="tg" x1="0" y1="0" x2="0" y2="1"><stop offset="0" stop-color="#ffffff"/><stop offset="0.45" stop-color="#f2f6fc"/><stop offset="1" stop-color="#cddcf2"/></linearGradient><linearGradient id="tg2" x1="0" y1="0" x2="1" y2="0"><stop offset="0" stop-color="#a8c8e4"/><stop offset="1" stop-color="#e4ecf6"/></linearGradient></defs><path d="M18.2 3.2H194.5V16.9H5.2Z" fill="url(#tg)"/><path d="M195.5 9L201 4.2V15.6H195.5Z" fill="url(#tg2)"/></svg>
<div class="t" style="left:562.12px;top:83.56px;font-size:7.5px;color:#151515;font-weight:bold;-webkit-text-stroke-width:0">191231(참고) 부당특약 심사지침 폐지제정안.pdf</div>
<div class="a" style="left:743.2px;top:86px;width:0;height:0;border-top:2.4px solid transparent;border-bottom:2.4px solid transparent;border-right:3.2px solid #0a0a0a"></div>
<div class="a" style="left:753.4px;top:86px;width:0;height:0;border-top:2.4px solid transparent;border-bottom:2.4px solid transparent;border-left:3.2px solid #0a0a0a"></div>
<div class="a" style="left:762.9px;top:86.3px;width:5.10px;height:1.20px;background:#0a0a0a;"></div>
<div class="a" style="left:762.9px;top:87.6px;width:0;height:0;border-left:2.55px solid transparent;border-right:2.55px solid transparent;border-top:3px solid #0a0a0a"></div>
<svg class="a" style="left:771.6px;top:86.1px" width="5" height="5"><path d="M0.5 0.5L4.3 4.3M4.3 0.5L0.5 4.3" stroke="#0a0a0a" stroke-width="1.2"/></svg>
<div class="a" style="left:543px;top:95px;width:241.00px;height:1.30px;background:#5a74a6;"></div>
<div class="a" style="left:543px;top:96.3px;width:241.00px;height:1.40px;background:#6690b8;"></div>
<div class="a" style="left:783.2px;top:96.3px;width:1.00px;height:299.70px;background:#6a98bc;"></div>
<div class="a" style="left:542.2px;top:96.3px;width:1.10px;height:300.20px;background:#6a98bc;"></div>
<div class="a" style="left:542.2px;top:395px;width:242.00px;height:1.20px;background:#6a98bc;"></div>
<div class="a" style="left:545.3px;top:99.2px;width:236.70px;height:293.20px;background:#5d6b98;border:0.9px solid #6c9cc4"></div>
<div class="a" style="left:553.1px;top:103.7px;width:39.60px;height:14.00px;background:#a5ade2;border:1px solid #7e86bc"></div>
<div class="t" style="left:555.61px;top:106.95px;font-size:7.9px;color:#222;">파일 저장</div>
<div class="a" style="left:598.75px;top:103.7px;width:66.95px;height:14.00px;background:#a5ade2;border:1px solid #7e86bc"></div>
<div class="t" style="left:601.61px;top:106.95px;font-size:7.9px;color:#222;">오류 및 불편 신고</div>
<div class="a" style="left:671.8px;top:103.7px;width:29.80px;height:14.00px;background:#a5ade2;border:1px solid #7e86bc"></div>
<div class="t" style="left:674.81px;top:106.95px;font-size:7.9px;color:#222;">북마크</div>
<div class="a" style="left:707.8px;top:103.7px;width:69.5px;height:14px;background:#a5ade2;border:1px solid #7e86bc;border-right:none;overflow:hidden"><div class="t" style="left:2.3px;top:2.3px;font-size:7.9px;color:#222">HWP 원본 파일 외부</div></div>
<div class="a" style="left:777px;top:102px;width:4.00px;height:17.00px;background:#5d6b98;"></div>
<div class="a" style="left:546px;top:120.7px;width:233.30px;height:14.70px;background:#f6f6f6;"></div>
<div class="a" style="left:546px;top:135.4px;width:233.30px;height:1.10px;background:#c4c4c4;"></div>
<div class="a" style="left:549.6px;top:123px;width:1.00px;height:10.50px;background:#d6d6d6;"></div>
<svg class="a" style="left:554.5px;top:123.8px" width="10" height="10"><path d="M0.3 0.3H8.5L9.5 1.3V9.5H0.3Z" fill="#e86a3e"/><rect x="1.8" y="0.3" width="6.2" height="3.6" fill="#a8dcd8"/><rect x="2.2" y="5.2" width="5.4" height="4.3" fill="#fff"/><rect x="5.6" y="6.2" width="1.2" height="2.6" fill="#e86a3e"/></svg>
<svg class="a" style="left:567.2px;top:123.2px" width="10.5" height="10.5"><rect x="2.2" y="0.4" width="5.8" height="3.2" fill="#fff" stroke="#a0b4c8" stroke-width="0.7"/><rect x="0.3" y="3.3" width="9.8" height="3.9" rx="1" fill="#5aa8e2"/><rect x="2.2" y="6.2" width="5.8" height="4" fill="#fff" stroke="#a0b4c8" stroke-width="0.7"/></svg>
<div class="a" style="left:581px;top:121.6px;width:13.00px;height:13.30px;background:#c4dcf4;border:1px solid #80b4e6"></div>
<svg class="a" style="left:583.2px;top:122.6px" width="10" height="12"><g fill="#f3cba6" stroke="#c9966e" stroke-width="0.45"><rect x="1.9" y="2.2" width="1.7" height="5" rx="0.85"/><rect x="3.6" y="0.9" width="1.7" height="6" rx="0.85"/><rect x="5.3" y="0.7" width="1.7" height="6" rx="0.85"/><rect x="7" y="1.6" width="1.6" height="5.5" rx="0.8"/><path d="M1.9 5.5H8.6V8Q8.6 11.2 5.4 11.2Q3 11.2 2 9.5L0.5 7.2Q0.2 6.4 1 6.2Q1.6 6.1 1.9 6.6Z"/></g><path d="M2.2 5.8H8.3V8" fill="#f3cba6"/></svg>
<svg class="a" style="left:596px;top:124.5px" width="10" height="9"><path d="M0.3 0.7H6.6M3.45 0.7V8.3" stroke="#333" stroke-width="1.1"/><path d="M5.5 3.8L9 6.8L7.2 6.9L8 8.6L7.2 8.8L6.4 7.2L5.5 8.2Z" fill="#333"/></svg>
<div class="a" style="left:608.1px;top:123px;width:1.00px;height:10.50px;background:#d6d6d6;"></div>
<svg class="a" style="left:611.5px;top:123.5px" width="10" height="10"><circle cx="3.9" cy="3.9" r="3.3" fill="#eef5fc" stroke="#4a88d6" stroke-width="1"/><path d="M6.3 6.3L9.3 9.1" stroke="#4a88d6" stroke-width="1.3"/><path d="M2.2 3.9H5.6M3.9 2.2V5.6" stroke="#3a78c8" stroke-width="0.9"/></svg>
<div class="a" style="left:623.3px;top:127.3px;width:0;height:0;border-left:1.6px solid transparent;border-right:1.6px solid transparent;border-top:2.2px solid #444"></div>
<div class="a" style="left:629.3px;top:124.6px;width:9.10px;height:8.10px;background:#fafafa;border:1px solid #bcbcbc"></div>
<svg class="a" style="left:631px;top:125.6px" width="6" height="7"><path d="M3 6.5L0.3 3.5H1.8V0.3H4.2V3.5H5.7Z" fill="#f06a30"/></svg>
<div class="a" style="left:640.5px;top:124.3px;width:20.50px;height:8.90px;background:#fafafa;border:1px solid #c4c4c4"></div>
<div class="t" style="left:643.62px;top:125.89px;font-size:7.6px;color:#333;">54 %</div>
<div class="a" style="left:663.3px;top:124.6px;width:9.10px;height:8.10px;background:#fafafa;border:1px solid #bcbcbc"></div>
<svg class="a" style="left:665px;top:125.6px" width="6" height="7"><path d="M3 0.3L0.3 3.3H1.8V6.5H4.2V3.3H5.7Z" fill="#5a94e6"/></svg>
<div class="a" style="left:675.3px;top:127.3px;width:0;height:0;border-left:1.6px solid transparent;border-right:1.6px solid transparent;border-top:2.2px solid #444"></div>
<div class="a" style="left:679px;top:121.5px;width:12.60px;height:13.20px;background:#c4dcf4;border:1px solid #80b4e6"></div>
<svg class="a" style="left:681.2px;top:123.8px" width="9" height="9"><rect x="0.4" y="0.4" width="8" height="8" rx="1.2" fill="#f4f8fc" stroke="#9aa4b4" stroke-width="0.8"/><path d="M4.4 0.8V8M0.8 4.4H8" stroke="#4a88e0" stroke-width="1"/></svg>
<svg class="a" style="left:694.6px;top:123.8px" width="9" height="9"><rect x="0.4" y="0.4" width="8.2" height="8" rx="1.2" fill="#f4f8fc" stroke="#9aa4b4" stroke-width="0.8"/><path d="M0.8 4.4H8.2" stroke="#4a88e0" stroke-width="1"/><rect x="1" y="1" width="7" height="2.5" fill="#dce8f6"/><rect x="1" y="5.3" width="7" height="2.5" fill="#dce8f6"/></svg>
<div class="a" style="left:706px;top:123px;width:1.00px;height:10.50px;background:#d6d6d6;"></div>
<svg class="a" style="left:709px;top:123.8px" width="10" height="9"><path d="M2.5 0.3H9.6V8.6H2.5L0.2 4.45Z" fill="#c8c8c8"/><path d="M6.5 2.5L4.6 4.45L6.5 6.4Z" fill="#eee"/><path d="M7.3 2.5V6.4" stroke="#eee" stroke-width="0.8"/></svg>
<svg class="a" style="left:722px;top:123.8px" width="10" height="9"><path d="M2.5 0.3H9.6V8.6H2.5L0.2 4.45Z" fill="#c8c8c8"/><path d="M6.6 2.5L4.6 4.45L6.6 6.4Z" fill="#eee"/></svg>
<svg class="a" style="left:736px;top:123.6px" width="10" height="10"><path d="M0.4 0.4H6.5L8.4 2.3V9.2H0.4Z" fill="#fff" stroke="#a8b0bc" stroke-width="0.7"/><circle cx="6" cy="5" r="3.5" fill="#2c86e2"/><path d="M5 3.1L7.3 5L5 6.9Z" fill="#fff"/></svg>
<svg class="a" style="left:749.2px;top:123.6px" width="10" height="10"><path d="M0.4 0.4H6.5L8.4 2.3V9.2H0.4Z" fill="#fff" stroke="#a8b0bc" stroke-width="0.7"/><circle cx="6" cy="5" r="3.5" fill="#2c86e2"/><path d="M4.3 3.1L6.2 5L4.3 6.9Z" fill="#fff"/><path d="M7 3.1V6.9" stroke="#fff" stroke-width="0.9"/></svg>
<svg class="a" style="left:774px;top:121.8px" width="5" height="4"><path d="M0.3 0.3L2 2L0.3 3.7M2.5 0.3L4.2 2L2.5 3.7" stroke="#333" stroke-width="0.8" fill="none"/></svg>
<div class="a" style="left:774.2px;top:132.5px;width:0;height:0;border-left:1.6px solid transparent;border-right:1.6px solid transparent;border-top:2px solid #333"></div>
<div class="a" style="left:546.3px;top:136.5px;width:233.20px;height:255.00px;background:#f4f4f4;"></div>
<div class="a" style="left:547px;top:136.5px;width:19.80px;height:252.50px;background:#d0d0d0;"></div>
<svg class="a" style="left:554.5px;top:142.9px" width="9" height="8"><rect x="0" y="0" width="8.3" height="1.7" rx="0.6" fill="#8ea4cc"/><rect x="1.2" y="3" width="7" height="1.6" fill="#949494"/><rect x="1.2" y="5.5" width="7" height="1.6" fill="#949494"/></svg>
<svg class="a" style="left:554px;top:160.6px" width="10" height="10"><circle cx="4" cy="4" r="3.2" fill="#dce6f2" stroke="#8aa2c4" stroke-width="1"/><path d="M6.3 6.3L9 9" stroke="#8aa2c4" stroke-width="1.4"/></svg>
<div class="a" style="left:569px;top:136.5px;width:199.00px;height:252.80px;background:#2a2a2a;"></div>
<div class="a" style="left:580px;top:137px;width:176.60px;height:249.50px;background:#fff;"></div>
<div class="a" style="left:768px;top:136.5px;width:11.50px;height:254.00px;background:#f0f0f0;"></div>
<svg class="a" style="left:770.5px;top:140.8px" width="7" height="5"><path d="M0.6 4L3.5 1.1L6.4 4" stroke="#333" stroke-width="1" fill="none"/></svg>
<div class="a" style="left:768.6px;top:148.6px;width:9.40px;height:76.00px;background:#cdcdcd;"></div>
<svg class="a" style="left:770.5px;top:382.5px" width="7" height="5"><path d="M0.6 1L3.5 3.9L6.4 1" stroke="#333" stroke-width="1" fill="none"/></svg>
<div class="a" style="left:597px;top:158.2px;width:142.60px;height:2.50px;background:#9a9a9a;"></div>
<div class="a" style="left:597px;top:194px;width:142.60px;height:2.00px;background:#9a9a9a;"></div>
<svg class="a" style="left:604.8px;top:165px" width="15" height="15" viewBox="-7.5 -7.5 15 15"><circle r="6.8" fill="#163e72"/><path d="M-3.6 2.2A4.3 4.3 0 1 1 4.6 0.2A2.2 2.2 0 0 0 0.3 -0.3A2.3 2.3 0 0 1 -3.6 2.2Z" fill="#fff"/><path d="M-0.8 -6.7A6.7 6.7 0 0 1 4.2 5.2" stroke="#dc2c46" stroke-width="1.4" fill="none"/></svg>
<div class="t" style="left:598.69px;top:182.38px;color:#555;font-size:4.6px;-webkit-text-stroke-width:0;transform:scale(0.8576,1.0000);transform-origin:0 0">공정거래위원회</div>
<div class="t" style="left:640.95px;top:162.35px;color:#3a3a3a;font-size:9.2px;letter-spacing:0.4px;-webkit-text-stroke-width:0.1px;transform:scale(0.8911,1.0000);transform-origin:0 0">보도참고자료</div>
<svg class="a" style="left:718.8px;top:163.2px" width="8" height="4"><path d="M3.6 3.8Q0.8 3.6 0.2 0.6Q3 0.6 3.6 3.8Q4.2 0.6 7.2 0.3Q6.6 3.6 3.6 3.8Z" fill="#86c440"/></svg>
<div class="t" style="left:706.20px;top:169.72px;color:#a88a5a;font-size:3.8px;-webkit-text-stroke-width:0;transform:scale(0.7851,1.0000);transform-origin:0 0">함께하는 성장, 공정경제</div>
<div class="a" style="left:627px;top:176px;width:54.50px;height:0.70px;background:#9a9a9a;"></div>
<div class="a" style="left:683px;top:176px;width:56.50px;height:0.70px;background:#9a9a9a;"></div>
<div class="a" style="left:627px;top:182.2px;width:63.00px;height:0.50px;background:#c4c4c4;"></div>
<div class="a" style="left:683px;top:182.2px;width:56.50px;height:0.50px;background:#c4c4c4;"></div>
<div class="a" style="left:683px;top:187.8px;width:56.50px;height:0.50px;background:#c4c4c4;"></div>
<div class="t" style="left:629.27px;top:178.30px;color:#8a8a8a;font-size:3.8px;-webkit-text-stroke-width:0;transform:scale(0.9050,1.0000);transform-origin:0 0">2019년 12월 31일(화) 배포</div>
<div class="t" style="left:629.27px;top:184.20px;color:#8a8a8a;font-size:3.8px;-webkit-text-stroke-width:0;transform:scale(0.9352,1.0000);transform-origin:0 0">2019년 12월 31일(화) 10:30부터</div>
<div class="t" style="left:629.30px;top:189.72px;color:#8a8a8a;font-size:3.8px;-webkit-text-stroke-width:0;transform:scale(0.7937,1.0000);transform-origin:0 0">보도 가능</div>
<div class="t" style="left:685.58px;top:178.43px;color:#8a8a8a;font-size:3.8px;-webkit-text-stroke-width:0;transform:scale(0.8796,1.0000);transform-origin:0 0">기업거래정책국 기업거래정책과</div>
<div class="t" style="left:685.36px;top:184.20px;color:#8a8a8a;font-size:3.8px;-webkit-text-stroke-width:0;transform:scale(0.8864,1.0000);transform-origin:0 0">담당과장 성경제(044-200-4583)</div>
<div class="t" style="left:684.56px;top:190.20px;color:#8a8a8a;font-size:3.8px;-webkit-text-stroke-width:0;transform:scale(0.8879,1.0000);transform-origin:0 0">담당 김중구 사무관(044-200-4588)</div>
<div class="t" style="left:604.19px;top:200.16px;color:#111;font-size:7.2px;font-weight:bold;text-decoration:underline;-webkit-text-stroke-width:0.35px;transform:scale(0.7500,1.1000);transform-origin:0 0">새로운 부당특약 유형 판단, 더 이상 헤매이지 않아요!!</div>
<div class="t" style="left:624.40px;top:212.25px;color:#222;font-size:4.9px;font-weight:bold;letter-spacing:0.5px;-webkit-text-stroke-width:0.15px;transform:scale(0.8631,1.1000);transform-origin:0 0">- 공정위, 부당특약 심사지침 폐지 · 제정 -</div>
<div class="a" style="left:597.5px;top:221.8px;width:141.00px;height:87.80px;background:transparent;border:0.8px solid #8a8a8a"></div>
<div class="a" style="left:600.2px;top:225.2px;width:3.50px;height:3.50px;background:#151515;"></div>
<div class="a" style="left:600.2px;top:291.1px;width:3.50px;height:3.50px;background:#151515;"></div>
<div class="t" style="left:607.09px;top:225.15px;color:#868686;font-size:4.6px;font-family:'Liberation Serif',serif;-webkit-text-stroke-width:0;letter-spacing:0.35px;transform:scale(0.8526,1.0000);transform-origin:0 0">공정거래위원회(위원장 조성욱, 이하 공정위)는 올해 제정된 부당특약</div>
<div class="t" style="left:607.08px;top:231.35px;color:#868686;font-size:4.6px;font-family:'Liberation Serif',serif;-webkit-text-stroke-width:0;letter-spacing:0.35px;transform:scale(0.8816,1.0000);transform-origin:0 0">고시(2019년 4월 시행)에 규정된 새로운 부당특약 유형에 대한 심사</div>
<div class="t" style="left:606.86px;top:236.78px;color:#868686;font-size:4.6px;font-family:'Liberation Serif',serif;-webkit-text-stroke-width:0;letter-spacing:0.35px;transform:scale(0.8874,1.0000);transform-origin:0 0">지침을 제정하여 <b style='color:#111'>내년 1월 1일부터</b> 시행한다.</div>
<div class="t" style="left:607.92px;top:246.97px;color:#868686;font-size:4.6px;font-family:'Liberation Serif',serif;-webkit-text-stroke-width:0;letter-spacing:0.35px;transform:scale(0.9680,1.0000);transform-origin:0 0">이번 심사지침 제정안에는 부당특약 고시 내용에 대한 <b style='color:#111'>자의적</b></div>
<div class="t" style="left:608.40px;top:252.57px;color:#868686;font-size:4.6px;font-family:'Liberation Serif',serif;-webkit-text-stroke-width:0;letter-spacing:0.35px;transform:scale(0.8801,1.0000);transform-origin:0 0"><b style='color:#111'>해석</b>을 <b style='color:#111'>방지</b>하기 위해 <b style='color:#111'>개념</b>을 <b style='color:#111'>명확히 정의</b>하고, 위법성 판단 기준에</div>
<div class="t" style="left:608.18px;top:258.18px;color:#868686;font-size:4.6px;font-family:'Liberation Serif',serif;-webkit-text-stroke-width:0;letter-spacing:0.35px;transform:scale(0.8882,1.0000);transform-origin:0 0"><b style='color:#111'>필수적으로 고려해야 할 요소</b>를 <b style='color:#111'>명시</b>했다.</div>
<div class="t" style="left:608.17px;top:267.88px;color:#868686;font-size:4.6px;font-family:'Liberation Serif',serif;-webkit-text-stroke-width:0;letter-spacing:0.35px;transform:scale(0.9211,1.0000);transform-origin:0 0">또한, 새로운 부당특약 유형이 <b style='color:#111'>하도급 현장</b>에서 <b style='color:#111'>효과적으로 금지</b></div>
<div class="t" style="left:607.92px;top:273.98px;color:#868686;font-size:4.6px;font-family:'Liberation Serif',serif;-webkit-text-stroke-width:0;letter-spacing:0.35px;transform:scale(0.9698,1.0000);transform-origin:0 0">될 수 있도록 기존 심결례, 사업자 단체 의견 등을 종합적으로</div>
<div class="t" style="left:607.95px;top:280.07px;color:#868686;font-size:4.6px;font-family:'Liberation Serif',serif;-webkit-text-stroke-width:0;letter-spacing:0.35px;transform:scale(0.9074,1.0000);transform-origin:0 0">검토하여 <b style='color:#111'>예시</b>를 <b style='color:#111'>마련</b>했다.</div>
<div class="t" style="left:607.43px;top:291.18px;color:#868686;font-size:4.6px;font-family:'Liberation Serif',serif;-webkit-text-stroke-width:0;letter-spacing:0.35px;transform:scale(0.9485,1.0000);transform-origin:0 0">이번 지침을 통해 새로운 부당특약 유형에 대한 <b style='color:#111'>법 집행의 예측</b></div>
<div class="t" style="left:605.77px;top:297.18px;color:#868686;font-size:4.6px;font-family:'Liberation Serif',serif;-webkit-text-stroke-width:0;letter-spacing:0.35px;transform:scale(0.9303,1.0000);transform-origin:0 0"><b style='color:#111'>가능성을 제고</b>하고, <b style='color:#111'>부당특약 설정 행위</b>를 사전에 <b style='color:#111'>방지</b>할 수 있을</div>
<div class="t" style="left:605.54px;top:302.98px;color:#868686;font-size:4.6px;font-family:'Liberation Serif',serif;-webkit-text-stroke-width:0;letter-spacing:0.35px;transform:scale(0.9260,1.0000);transform-origin:0 0">것으로 기대한다.</div>
<div class="a" style="left:602.4px;top:247.30px;width:2.6px;height:2.6px;border:0.6px solid #aaa;border-radius:50%"></div>
<div class="a" style="left:602.4px;top:268.20px;width:2.6px;height:2.6px;border:0.6px solid #aaa;border-radius:50%"></div>
<div class="a" style="left:597.3px;top:317.3px;width:8.40px;height:8.90px;background:#0c1a78;"></div>
<div class="t" style="left:599.48px;top:318.76px;font-size:6.4px;color:#fff;font-weight:bold">1</div>
<div class="a" style="left:609.2px;top:317.3px;width:49.20px;height:8.90px;background:#fff;border:0.8px solid #333;box-shadow:0 0 0 0.5px #aaa"></div>
<div class="t" style="left:612.30px;top:320.55px;color:#111;font-size:5.8px;font-weight:bold;letter-spacing:0.3px;transform:scale(0.8752,1.0000);transform-origin:0 0">제정 배경</div>
<div class="a" style="left:597.3px;top:334.9px;width:3.90px;height:3.90px;background:transparent;border:0.5px solid #777"></div>
<div class="t" style="left:603.58px;top:335.15px;color:#868686;font-size:4.6px;font-family:'Liberation Serif',serif;-webkit-text-stroke-width:0;letter-spacing:0.35px;transform:scale(0.8856,1.0000);transform-origin:0 0">부당특약 심사지침(예규) <b style='color:#111'>존속 기한</b>이 2019년 12월 31일자로 <b style='color:#111'>도래</b>함에</div>
<div class="t" style="left:603.57px;top:341.77px;color:#868686;font-size:4.6px;font-family:'Liberation Serif',serif;-webkit-text-stroke-width:0;letter-spacing:0.35px;transform:scale(0.9108,1.0000);transform-origin:0 0">따라 이를 <b style='color:#111'>3년 연장</b>하면서 기존 지침을 폐지하고 다시 제정했다.</div>
<div class="t" style="left:602.47px;top:350.60px;color:#999;font-size:3.8px;;transform:scale(1.0526,1.0000);transform-origin:0 0">· 연혁 : 2014년 2월 12일 최초 제정 → 2016년 9월 30일 일몰 기한 연장(현행)</div>
<div class="t" style="left:664.82px;top:369.74px;font-size:3.7px;color:#999;">- 1 -</div>
</body></html>
